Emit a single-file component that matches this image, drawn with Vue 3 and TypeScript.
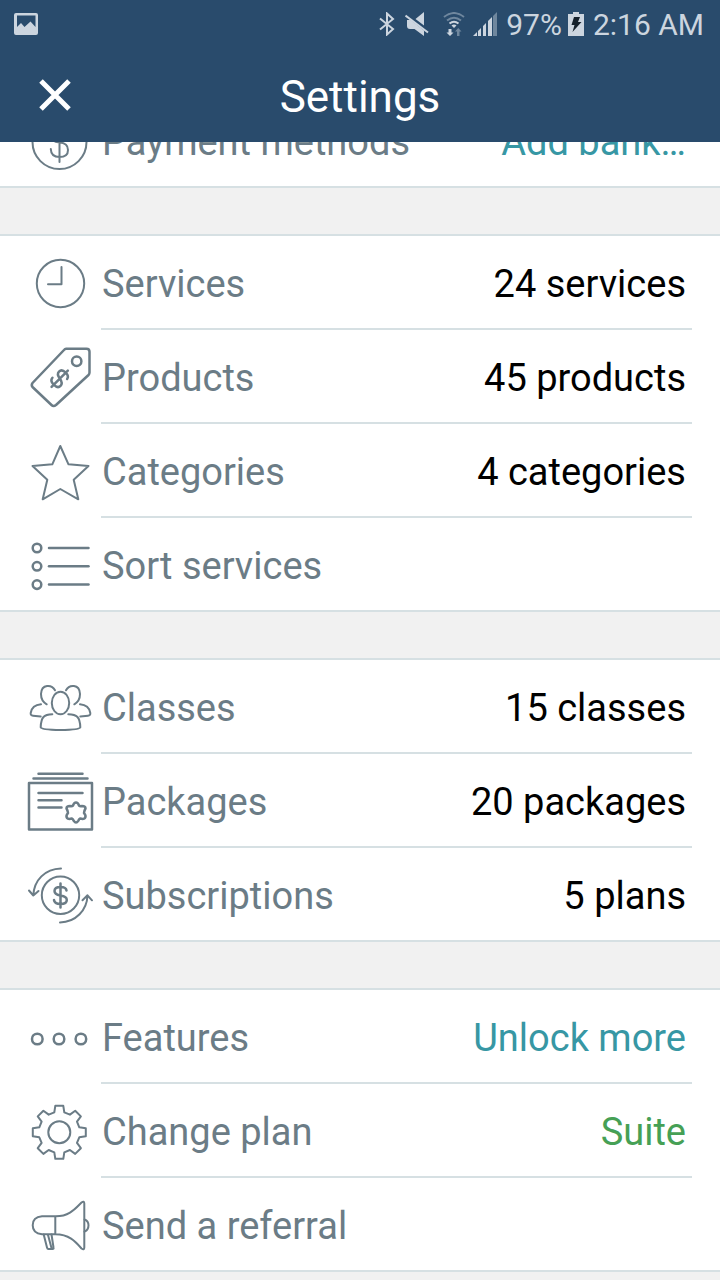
<script setup lang="ts">
type IconName =
  | 'payment' | 'clock' | 'tag' | 'star' | 'list' | 'people'
  | 'package' | 'subscription' | 'dots' | 'gear' | 'megaphone'

interface Row {
  icon: IconName
  label: string
  value?: string
  tone?: 'link' | 'plan'
}

const groups: Row[][] = [
  [{ icon: 'payment', label: 'Payment methods', value: 'Add bank…', tone: 'link' }],
  [
    { icon: 'clock', label: 'Services', value: '24 services' },
    { icon: 'tag', label: 'Products', value: '45 products' },
    { icon: 'star', label: 'Categories', value: '4 categories' },
    { icon: 'list', label: 'Sort services' },
  ],
  [
    { icon: 'people', label: 'Classes', value: '15 classes' },
    { icon: 'package', label: 'Packages', value: '20 packages' },
    { icon: 'subscription', label: 'Subscriptions', value: '5 plans' },
  ],
  [
    { icon: 'dots', label: 'Features', value: 'Unlock more', tone: 'link' },
    { icon: 'gear', label: 'Change plan', value: 'Suite', tone: 'plan' },
    { icon: 'megaphone', label: 'Send a referral' },
  ],
]

// Outline of an eight-toothed gear around (cx, cy).
function gearPath(cx: number, cy: number): string {
  const points: string[] = []
  const tooth: [number, number][] = [[-5, 20], [-4, 26.5], [4, 26.5], [5, 20]]
  for (let i = 0; i < 8; i++) {
    const a = (i * Math.PI) / 4
    for (const [dx, dy] of tooth) {
      const x = cx + dx * Math.cos(a) + dy * Math.sin(a)
      const y = cy + dx * Math.sin(a) - dy * Math.cos(a)
      points.push(`${x.toFixed(2)} ${y.toFixed(2)}`)
    }
  }
  return `M${points.join('L')}Z`
}
const gear = gearPath(31.3, 34.3)
</script>

<template>
  <div class="page">
    <header class="top">
      <div class="status">
        <svg class="picture" width="24" height="24" viewBox="0 0 24 24" aria-hidden="true">
          <path fill-rule="evenodd" d="M2 1H22Q24 1 24 3V21Q24 23 22 23H2Q0 23 0 21V3Q0 1 2 1ZM3 3.5V15L7 11L10.500 15L16.500 9.500L21.500 15V3.500Z" />
        </svg>
        <div class="system">
          <svg width="16" height="24" viewBox="0 0 16 24" aria-hidden="true">
            <path class="line" d="M1 6.500L14 17L8 22.500V1.500L14 7L1 17.500" />
          </svg>
          <svg class="mute" width="24" height="24" viewBox="0 0 24 24" aria-hidden="true">
            <path d="M10.500 7L19 0V13.500ZM2 8H5.500L19 18.500V24L9.500 17H5Q2 17 2 14Z" />
            <path class="line" d="M0.500 3.500L23 20.500" />
          </svg>
          <svg class="wifi" width="22" height="24" viewBox="0 0 22 24" aria-hidden="true">
            <path class="line dim" d="M1 5Q11 -3 21 5M4 8.500Q11 3 18 8.500" />
            <path class="line" d="M6.500 11.500Q11 8 15.500 11.500" />
            <path d="M8.500 13.500Q11 11.500 13.500 13.500L11 16Z" />
            <path d="M5.500 17H8.500V20.500H10.500L7 24L3.500 20.500H5.500Z" />
            <path class="dimfill" d="M14 24H16.500V19.500H18.500L15.200 16L12 19.500H14Z" />
          </svg>
          <svg class="signal" width="24" height="24" viewBox="0 0 24 24" aria-hidden="true">
            <path d="M0 24L4 20V24ZM5 24V19L8 16V24ZM10 24V14L13 11V24ZM15 24V9L19 5V24Z" />
            <path class="dimfill" d="M20 24V4L24 0V24Z" />
          </svg>
          <span class="percent">97%</span>
          <svg class="battery" width="16" height="24" viewBox="0 0 16 24" aria-hidden="true">
            <path d="M5 0H11V2H16V24H0V2H5Z" />
            <path class="bolt" d="M6 5H12L10 10H13.500L4.500 20L6.500 13H3.500Z" />
          </svg>
          <span class="time">2:16 AM</span>
        </div>
      </div>
      <div class="bar">
        <button class="close" type="button" aria-label="Close">
          <svg width="32" height="32" viewBox="0 0 32 32" aria-hidden="true">
            <path d="M2 2L30 30M30 2L2 30" />
          </svg>
        </button>
        <h1>Settings</h1>
      </div>
    </header>

    <main class="list">
      <section v-for="(group, g) in groups" :key="g" class="group">
        <button v-for="row in group" :key="row.label" class="row" type="button">
          <svg class="icon" width="64" height="64" viewBox="0 0 64 64" aria-hidden="true">
            <g v-if="row.icon === 'payment'">
              <circle cx="31.500" cy="34" r="27" />
              <path d="M31.500 16V54M40 27Q39 20 31.500 20Q23 20 23 27.500Q23 34 31.500 34.500Q40 35 40 42Q40 49 31.500 49Q23 49 22.800 41" />
            </g>
            <g v-else-if="row.icon === 'clock'">
              <circle cx="32.500" cy="33.500" r="23.700" />
              <path d="M33.500 17V34.300H20" />
            </g>
            <g v-else-if="row.icon === 'tag'" class="medium">
              <path d="M38 4.700H58.500Q61.500 4.700 61.500 7.700V28.500Q61.500 30 60.500 31L28 61Q25.500 63 23.500 61L4.500 43Q3 41 4.500 39L36 6Q37 4.700 38 4.700Z" />
              <circle cx="48.700" cy="17.300" r="4.700" />
              <path transform="translate(31.700 34.700) rotate(45)" d="M0 -11.500V11.500M5.500 -5Q5 -8.500 0 -8.500Q-5.500 -8.500 -5.500 -4.500Q-5.500 -1 0 -.2Q5.700 .8 5.700 4.500Q5.700 8.500 0 8.500Q-5.500 8.500 -5.800 4.500" />
            </g>
            <g v-else-if="row.icon === 'star'">
              <path d="M32.300 8L40.500 26.300L60.500 28L45.700 41.700L50.300 61.300L32.300 51L14.700 61.300L19.300 41.700L4.500 28L24.300 26.300Z" />
            </g>
            <g v-else-if="row.icon === 'list'" class="medium">
              <g v-for="y in [16, 34.3, 52.6]" :key="y">
                <circle cx="9" :cy="y" r="4.300" />
                <path d="M21 0H60.500" :transform="`translate(0 ${y})`" />
              </g>
            </g>
            <g v-else-if="row.icon === 'people'">
              <ellipse cx="32.500" cy="29" rx="8.700" ry="11.300" />
              <path d="M24.300 40.300C16 40.500 13 43 12.700 53.300Q13 55.500 32.500 56Q52 55.500 52.300 53.300C52 43 49 40.500 40.300 40.300" />
              <path d="M27 16.300C24 10.500 13.500 9.500 13 20Q13 27 18.700 30.300M13 30.300Q4 31 2.700 39Q2.300 41.500 5 41.700L12.700 42.500" />
              <path d="M38 16.300C41 10.500 51.500 9.500 52 20Q52 27 46.300 30.300M52 30.300Q61 31 62.300 39Q62.700 41.500 60 41.700L52.300 42.500" />
            </g>
            <g v-else-if="row.icon === 'package'" class="medium">
              <path d="M10.500 5.700H54.500M5.500 10.500H59.500M10.500 25H54.500M10.500 32.300H33.500M10.500 39.500H33.500" />
              <rect x="1" y="15" width="63" height="46.500" />
              <path d="M48 34.500Q50 34.500 51 37.500Q52 38.500 54 38Q57.500 38 57.500 40.500Q56 43 56 45Q58.500 48 57 50Q56 51.500 52 50.500Q51 51 50.500 52.500Q49 54.500 48 54.500Q47 54.500 45.500 52.500Q45 51 44 50.500Q40 51.500 39 50Q37.500 48 40 45Q40 43 38.500 40.500Q38.500 38 42 38Q44 38.500 45 37.500Q46 34.500 48 34.500Z" />
            </g>
            <g v-else-if="row.icon === 'subscription'">
              <circle cx="32.500" cy="33.300" r="18.700" />
              <path d="M33 6.500C17 7 6 18 5.300 33.500M1 28.500L5.300 33.500L10.500 29M32 60.500C48 60 59 48 59.500 33.500M54.500 38.300L59.500 33.300L64 38.300" />
              <path class="medium" d="M32.500 21.500V45.500M38.500 28.500Q38 25 32.500 25Q26.500 25 26.500 29Q26.500 32.500 32.500 33.500Q38.800 34.300 38.800 38Q38.800 42 32.500 42Q26.500 42 26 38" />
            </g>
            <g v-else-if="row.icon === 'dots'" class="medium">
              <circle v-for="x in [9.3, 31, 52.9]" :key="x" :cx="x" cy="35" r="5.300" />
            </g>
            <g v-else-if="row.icon === 'gear'">
              <path :d="gear" />
              <circle cx="31.300" cy="34.300" r="11" />
            </g>
            <g v-else>
              <path d="M27.300 24.300H14Q4.700 25 4.700 33.300Q4.700 41.500 14 42.300H27.300ZM27.300 24.300C41 24.500 47 17 53.500 10.500Q56.300 8.500 56.300 11.500V55.500Q56.300 58.500 53.500 56.500C47 49 41 42.500 27.300 42.300" />
              <path d="M56.500 27.500Q60.500 29 60.500 33.300Q60.500 38 56.500 39.700M15.700 42.500L19 55.500Q19.300 57 20.500 57H24.500Q26 57 25.500 55.500L23.500 42.500M20 43L23.500 56" />
            </g>
          </svg>
          <span class="content">
            <span class="label">{{ row.label }}</span>
            <span v-if="row.value" class="value" :class="row.tone">{{ row.value }}</span>
          </span>
        </button>
      </section>
    </main>
  </div>
</template>

<style>
body {
  margin: 0;
  background: #f1f1f1;
}
</style>

<style scoped>
.page {
  min-height: 100vh;
  overflow: hidden;
  background: #f1f1f1;
  font-family: Roboto, "Liberation Sans", sans-serif;
}

.top {
  position: relative;
  z-index: 1;
  background: #294b6c;
}

.status {
  display: flex;
  justify-content: space-between;
  align-items: center;
  height: 48px;
  padding: 0 16px 0 14px;
  color: #ccd5df;
  font-size: 30px;
  line-height: 48px;
  white-space: nowrap;
}

.status svg {
  flex: none;
  fill: #ccd5df;
}

.status .line {
  fill: none;
  stroke: #ccd5df;
  stroke-width: 2;
}

.status .dim {
  stroke: #6f879e;
}

.status .dimfill {
  fill: #6f879e;
}

.status .bolt {
  fill: #14202b;
}

.system {
  display: flex;
  align-items: center;
}

.percent,
.time {
  padding-top: 2px;
  line-height: 46px;
}

.mute {
  margin-left: 10px;
}

.wifi {
  margin-left: 14px;
}

.signal {
  margin-left: 8px;
}

.percent {
  margin-left: 9px;
}

.battery {
  margin: 0 9px 0 6px;
}

.bar {
  display: grid;
  grid-template-columns: 110px 1fr 110px;
  align-items: center;
  height: 94px;
}

.close {
  display: flex;
  align-items: center;
  justify-content: center;
  height: 94px;
  padding: 0;
  border: 0;
  background: none;
  cursor: pointer;
}

.close path {
  fill: none;
  stroke: #fff;
  stroke-width: 5;
}

h1 {
  margin: 0;
  padding-top: 4px;
  color: #fff;
  font-size: 44px;
  font-weight: 400;
  line-height: 52px;
  text-align: center;
}

.list {
  display: flex;
  flex-direction: column;
  gap: 46px;
  margin-top: -50px;
}

.group {
  border-top: 2px solid #d6e0e3;
  border-bottom: 2px solid #d6e0e3;
  background: #fff;
}

.row {
  display: flex;
  align-items: flex-start;
  width: 100%;
  padding: 0 28px;
  border: 0;
  background: none;
  font: inherit;
  text-align: left;
  cursor: pointer;
}

.icon {
  flex: none;
  margin-top: 14px;
  overflow: visible;
  fill: none;
  stroke: #6b7c86;
  stroke-width: 2;
  stroke-linecap: round;
  stroke-linejoin: round;
}

.medium {
  stroke-width: 2.5;
}

.content {
  display: flex;
  flex: 1;
  align-items: center;
  justify-content: space-between;
  height: 92px;
  margin-left: 9px;
  padding: 4px 6px 0 1px;
  box-sizing: border-box;
  font-size: 38px;
  line-height: 44px;
  white-space: nowrap;
}

.row:not(:last-child) .content {
  height: 94px;
  border-bottom: 2px solid #d6e0e3;
}

.label {
  color: #6b7c86;
}

.value {
  color: #000;
}

.link {
  color: #3797a4;
}

.plan {
  color: #46a055;
}
</style>
